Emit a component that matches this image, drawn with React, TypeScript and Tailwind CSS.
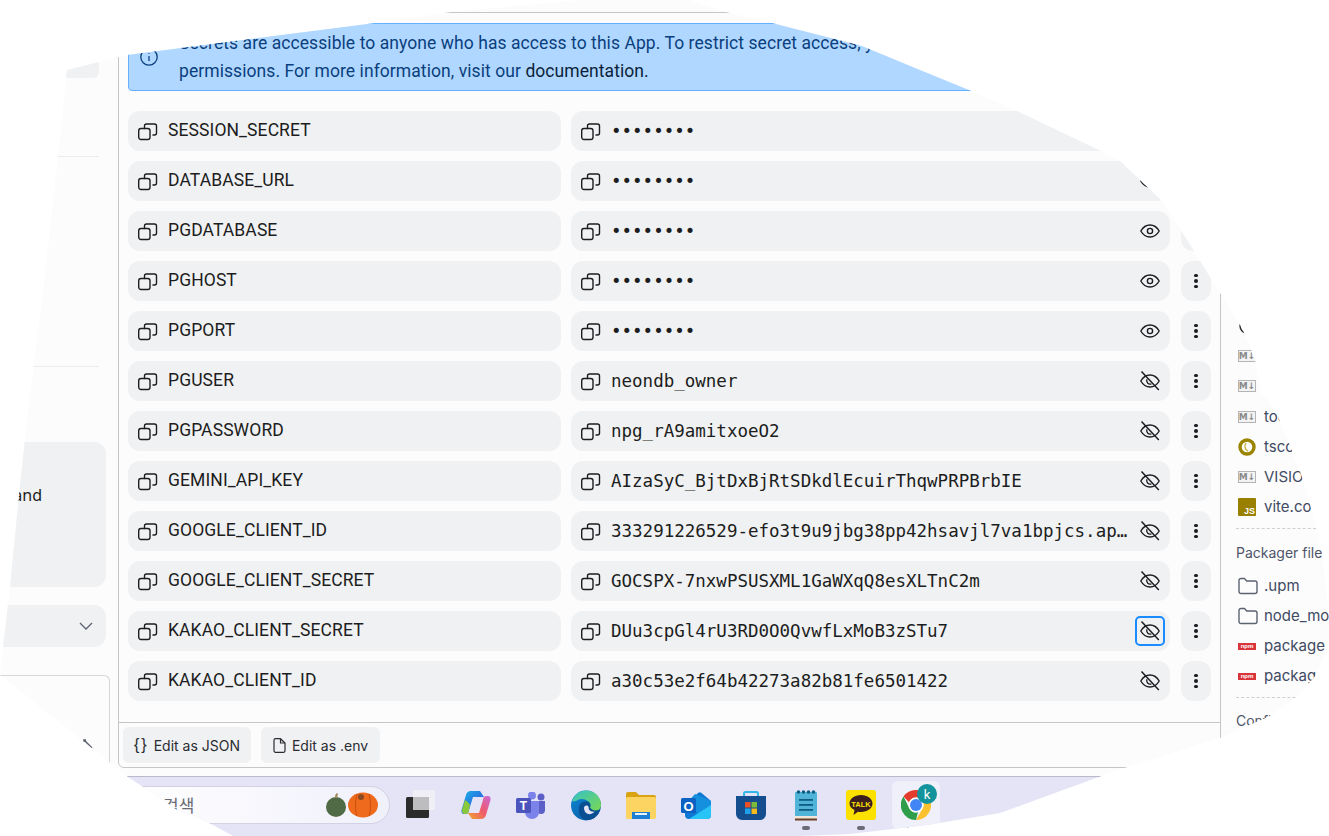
const secrets = [
  { name: "SESSION_SECRET", value: "••••••••", shown: false },
  { name: "DATABASE_URL", value: "••••••••", shown: false },
  { name: "PGDATABASE", value: "••••••••", shown: false },
  { name: "PGHOST", value: "••••••••", shown: false },
  { name: "PGPORT", value: "••••••••", shown: false },
  { name: "PGUSER", value: "neondb_owner", shown: true },
  { name: "PGPASSWORD", value: "npg_rA9amitxoeO2", shown: true },
  { name: "GEMINI_API_KEY", value: "AIzaSyC_BjtDxBjRtSDkdlEcuirThqwPRPBrbIE", shown: true },
  { name: "GOOGLE_CLIENT_ID", value: "333291226529-efo3t9u9jbg38pp42hsavjl7va1bpjcs.apps.googleusercontent.com", shown: true },
  { name: "GOOGLE_CLIENT_SECRET", value: "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", shown: true },
  { name: "KAKAO_CLIENT_SECRET", value: "DUu3cpGl4rU3RD0O0QvwfLxMoB3zSTu7", shown: true, focused: true },
  { name: "KAKAO_CLIENT_ID", value: "a30c53e2f64b42273a82b81fe6501422", shown: true },
];

function CopyIcon() {
  return (
    <svg width="20" height="20" viewBox="0 0 20 20" fill="none" stroke="#1c1d20" strokeWidth="1.4" className="shrink-0">
      <rect x="0.7" y="7.5" width="11.3" height="11" rx="2.2" />
      <path d="M6.5 7.500V5a2 2 0 0 1 2-2h8a2 2 0 0 1 2 2v7a2 2 0 0 1-2 2H15" strokeLinecap="round" />
    </svg>
  );
}

function EyeIcon({ off }: { off?: boolean }) {
  return (
    <svg width="20" height="20" viewBox="0 0 20 20" fill="none" stroke="#1c1d20" strokeWidth="1.4" strokeLinejoin="round">
      <path d="M0.8 10C3 6.2 6.2 4 10 4s7 2.2 9.2 6c-2.2 3.8-5.4 6-9.2 6s-7-2.2-9.2-6Z" />
      {off ? (
        <>
          <path d="M7 8.2a3.4 3.4 0 0 0 4.4 4.6" />
          <path d="M1.5 0.6 18.8 19" strokeWidth="1.5" stroke="#1c1d20" />
        </>
      ) : (
        <circle cx="10" cy="10" r="2.6" />
      )}
    </svg>
  );
}

function SecretRow({ name, value, shown, focused }: { name: string; value: string; shown: boolean; focused?: boolean }) {
  return (
    <div className="flex h-10 items-stretch">
      <div className="flex w-[433px] items-center gap-[10px] rounded-xl bg-[#f0f1f3] pl-[10px]">
        <CopyIcon />
        <span className="pb-[2px] text-[17.5px] leading-[24px] tracking-[0.1px] text-[#1c1d20] [font-family:'Roboto',sans-serif]">{name}</span>
      </div>
      <div className="ml-[10px] flex w-[599px] items-center rounded-xl bg-[#f0f1f3] pl-[10px] pr-[5px]">
        <CopyIcon />
        <span className="ml-[10px] min-w-0 flex-1 truncate pb-[1px] text-[17.5px] leading-[24px] text-[#1c1d20] [font-family:'DejaVu_Sans_Mono',monospace]">
          {value}
        </span>
        <span
          className={`ml-[4px] flex h-[30px] w-[30px] shrink-0 items-center justify-center rounded-[5px] ${
            focused ? "border-2 border-[#1a8cff]" : ""
          }`}
        >
          <EyeIcon off={shown} />
        </span>
      </div>
      <div className="ml-[11px] flex w-[30px] flex-col items-center justify-center gap-[2px] rounded-xl bg-[#f0f1f3]">
        <span className="h-[3.5px] w-[3.5px] rounded-full bg-[#1c1d20]" />
        <span className="h-[3.5px] w-[3.5px] rounded-full bg-[#1c1d20]" />
        <span className="h-[3.5px] w-[3.5px] rounded-full bg-[#1c1d20]" />
      </div>
    </div>
  );
}

function MdIcon() {
  return (
    <span className="flex h-[12px] w-[18px] items-center justify-center border border-[#b4b4b4] bg-[#f3f3f3] text-[9px] font-bold leading-none text-[#8a8a8a] [font-family:'DejaVu_Sans',sans-serif]">
      M↓
    </span>
  );
}

function FolderIcon() {
  return (
    <svg width="20" height="18" viewBox="0 0 20 18" fill="none" stroke="#5c6270" strokeWidth="1.4" strokeLinejoin="round">
      <path d="M1 3.5a2 2 0 0 1 2-2h3.5l2.2 2.5H17a2 2 0 0 1 2 2v8.5a2 2 0 0 1-2 2H3a2 2 0 0 1-2-2Z" />
    </svg>
  );
}

function NpmIcon() {
  return (
    <span className="flex h-[7px] w-[18px] items-center justify-center bg-[#d9343a] text-[6px] font-bold leading-none text-white [font-family:'Liberation_Sans',sans-serif]">
      npm
    </span>
  );
}

function TsIcon() {
  return (
    <svg width="18" height="18" viewBox="0 0 18 18" fill="none">
      <circle cx="9" cy="9" r="7" stroke="#9a8400" strokeWidth="3.4" />
      <path d="M8 5c-2 3-1 7 2 8" stroke="#c9b84a" strokeWidth="1.5" />
    </svg>
  );
}

function JsIcon() {
  return (
    <span className="flex h-[18px] w-[18px] items-end justify-end rounded-[1px] bg-[#9a8000] pr-[1px] text-[9px] font-bold leading-[10px] text-white [font-family:'Liberation_Sans',sans-serif]">
      JS
    </span>
  );
}

function RingIcon() {
  return (
    <svg width="18" height="18" viewBox="0 0 18 18" fill="none" stroke="#2b2d33" strokeWidth="1.4">
      <circle cx="9" cy="9" r="7" />
    </svg>
  );
}

function TreeRow({ icon, label }: { icon: React.ReactNode; label: string }) {
  return (
    <div className="flex h-[30px] items-center whitespace-nowrap pl-[17px] text-[15px] text-[#3f4a63]">
      <span className="flex w-[26px] shrink-0 items-center">{icon}</span>
      {label}
    </div>
  );
}

function Sidebar() {
  return (
    <div className="flex h-[768px] w-[118px] shrink-0 flex-col text-[#1c1d20]">
      <div className="h-[78px] w-[99px] rounded-b-md bg-[#f0f1f3]" />
      <div className="mt-[78px] w-[99px] border-t border-[#ececec]" />
      <div className="mt-[209px] w-[99px] border-t border-[#ececec]" />
      <div className="mt-[75px] flex h-[145px] w-[106px] items-center rounded-r-xl bg-[#f0f1f3] pb-[40px] text-[16px] [font-family:'Noto_Sans',sans-serif]">
        <span className="block w-full pr-[64px] text-right">and</span>
      </div>
      <div className="mt-[18px] flex h-[42px] w-[106px] items-center justify-end rounded-r-xl bg-[#f0f1f3] pr-[13px]">
        <svg width="14" height="8" viewBox="0 0 14 8" fill="none" stroke="#5c6270" strokeWidth="1.3">
          <path d="m1 1 6 6 6-6" />
        </svg>
      </div>
      <div className="mt-[28px] flex h-[93px] w-[110px] items-end justify-end rounded-tr-md border-r border-t border-[#d6d6d8] pb-[19px] pr-[16px]">
        <svg width="10" height="10" viewBox="0 0 10 10" fill="none" stroke="#5c6270" strokeWidth="1.6">
          <path d="M1 3V1h2M1 1l8 8" />
        </svg>
      </div>
    </div>
  );
}

function Panel() {
  return (
    <div className="mt-[12px] flex h-[756px] w-[1103px] shrink-0 flex-col rounded-bl-md border border-[#c6c6c6]">
      <div className="flex-1 px-[9px] pt-[10px]">
        <div className="mb-[20px] flex h-[68px] w-[1083px] gap-[11px] rounded-[4px] border border-[#64b0ff] bg-[#b0d7ff] pl-[11px] pt-[5px] text-[17.5px] leading-[28px] tracking-[0.07px] text-[#0a3f7d] [font-family:'Roboto',sans-serif]">
          <svg width="18" height="18" viewBox="0 0 18 18" fill="none" stroke="#0a3f7d" strokeWidth="1.3" className="mt-[19px] shrink-0">
            <circle cx="9" cy="9" r="8.2" />
            <path d="M9 8v5M9 5v.8" />
          </svg>
          <div className="whitespace-nowrap pl-[10px]">
            <div>Secrets are accessible to anyone who has access to this App. To restrict secret access, you can edit this App's</div>
            <div>
              permissions. For more information, visit our <span className="text-[#0b1f3a]">documentation.</span>
            </div>
          </div>
        </div>
        <div className="flex flex-col gap-[10px]">
          {secrets.map((s) => (
            <SecretRow key={s.name} {...s} />
          ))}
        </div>
      </div>
      <div className="flex h-[45px] items-center gap-[10px] border-t border-[#c6c6c6] px-[4px] text-[14px] text-[#2a2c31] [font-family:'Inter',sans-serif]">
        <button className="flex h-[36px] w-[128px] items-center gap-[5px] rounded-md bg-[#f0f1f3] pl-[11px]">
          <span className="text-[16px] leading-none tracking-[2px] [font-family:'Liberation_Sans',sans-serif]">{"{}"}</span>
          Edit as JSON
        </button>
        <button className="flex h-[36px] w-[119px] items-center justify-center gap-[6px] rounded-md bg-[#f0f1f3]">
          <svg width="13" height="15" viewBox="0 0 13 15" fill="none" stroke="#2a2c31" strokeWidth="1.2" strokeLinejoin="round">
            <path d="M1 2.2A1.5 1.5 0 0 1 2.5.7h5L12 5v7.8a1.5 1.5 0 0 1-1.5 1.5h-8A1.5 1.5 0 0 1 1 12.8Z" />
            <path d="M7.500.7V5H12" />
          </svg>
          Edit as .env
        </button>
      </div>
    </div>
  );
}

function FileTree() {
  return (
    <div className="min-w-0 flex-1 pt-[311px] [font-family:'Inter',sans-serif]">
      <TreeRow icon={<RingIcon />} label="components.json" />
      <TreeRow icon={<MdIcon />} label="README.md" />
      <TreeRow icon={<MdIcon />} label="NOTES.md" />
      <div className="pt-[1px]">
        <TreeRow icon={<MdIcon />} label="todo.md" />
      </div>
      <TreeRow icon={<TsIcon />} label="tsconfig.json" />
      <TreeRow icon={<MdIcon />} label="VISION.md" />
      <TreeRow icon={<JsIcon />} label="vite.config.js" />
      <div className="ml-[15px] mt-[6px] w-[80px] border-t border-dashed border-[#cfcfcf]" />
      <div className="mt-[14px] whitespace-nowrap pl-[15px] text-[14px] leading-[20px] text-[#4e5569]">Packager files</div>
      <div className="mt-[8px]">
        <TreeRow icon={<FolderIcon />} label=".upm" />
        <TreeRow icon={<FolderIcon />} label="node_modules" />
        <TreeRow icon={<NpmIcon />} label="package.json" />
        <TreeRow icon={<NpmIcon />} label="package-lock.json" />
      </div>
      <div className="ml-[15px] mt-[6px] w-[80px] border-t border-dashed border-[#cfcfcf]" />
      <div className="mt-[13px] whitespace-nowrap pl-[15px] text-[14px] leading-[20px] text-[#4e5569]">Config files</div>
    </div>
  );
}

function TaskView() {
  return (
    <svg width="32" height="30" viewBox="0 0 32 30">
      <rect x="1" y="7" width="23" height="21" rx="1.5" fill="#2b2b2b" />
      <rect x="8" y="0" width="22" height="20" rx="1.5" fill="#f1f1f4" fillOpacity="0.85" />
      <rect x="8" y="7" width="16" height="13" fill="#bdbdc0" />
    </svg>
  );
}

function Copilot() {
  return (
    <svg width="30" height="28" viewBox="0 0 30 28">
      <defs>
        <linearGradient id="cpa" x1="0" y1="0" x2="1" y2="1">
          <stop offset="0" stopColor="#19b5e6" />
          <stop offset="0.6" stopColor="#2a6fe0" />
          <stop offset="1" stopColor="#6a4fd8" />
        </linearGradient>
        <linearGradient id="cpb" x1="0" y1="1" x2="1" y2="0">
          <stop offset="0" stopColor="#f0a52a" />
          <stop offset="0.5" stopColor="#ef5a6b" />
          <stop offset="1" stopColor="#c86ad8" />
        </linearGradient>
      </defs>
      <path d="M10 0h9l4 6H12L8 19a4 4 0 0 1-4 4H3c-2 0-3-2-2.500-4L5 4c.7-2.500 2.500-4 5-4Z" fill="url(#cpa)" />
      <path d="M20 28h-9l-4-6h11l4-13a4 4 0 0 1 4-4h1c2 0 3 2 2.500 4L25 24c-.7 2.500-2.500 4-5 4Z" fill="url(#cpb)" />
      <path d="M4 23c-2 0-3.500-2-3-4l3-10c2 1 4 3 5 5l-1 5a4 4 0 0 1-4 4Z" fill="#8bc83c" />
    </svg>
  );
}

function Teams() {
  return (
    <svg width="30" height="27" viewBox="0 0 30 27">
      <circle cx="25" cy="5" r="3.500" fill="#5b5fc7" />
      <circle cx="16" cy="3.500" r="4" fill="#7b83eb" />
      <path d="M21 9h8v9a4 4 0 0 1-8 0Z" fill="#5b5fc7" />
      <path d="M9 9h14v11a7 7 0 0 1-14 0Z" fill="#7b83eb" />
      <rect x="0" y="6" width="15" height="15" rx="1.500" fill="#4b53bc" />
      <text x="7.500" y="18" textAnchor="middle" fontSize="12" fontWeight="700" fill="#fff" fontFamily="Liberation Sans, sans-serif">T</text>
    </svg>
  );
}

function Edge() {
  return (
    <svg width="30" height="31" viewBox="0 0 30 31">
      <defs>
        <linearGradient id="edb" x1="0" y1="0" x2="0.6" y2="1">
          <stop offset="0" stopColor="#0d8ad8" />
          <stop offset="1" stopColor="#0a5fa8" />
        </linearGradient>
        <linearGradient id="edg" x1="0" y1="0" x2="1" y2="1">
          <stop offset="0" stopColor="#35c1c8" />
          <stop offset="1" stopColor="#7ad94e" />
        </linearGradient>
      </defs>
      <circle cx="15" cy="15.500" r="15" fill="url(#edb)" />
      <path d="M1 11C4 4 9 .5 15 .5 24 .5 30 7 30 15c0 4-3 6-7 6-3 0-5-1-5-2 2-2 2-5 0-7-3-3-8-4-11-2-2 1-4 2-6 1Z" fill="url(#edg)" />
      <path d="M8 18c0-5 4-7 8-6.500 3 .5 4 3 3 6 2 3 6 4 10 2-2 7-8 11-13 10.500C10 29 7 24 8 18Z" fill="#0a4f92" />
      <path d="M13 18c0-2 2-3 4-2 1 1 .5 2.500 1 3.500 1.500 2 4 2.500 6 2-2 2-5 3-7 2.500-3-1-4-4-4-6Z" fill="#e4e4f6" />
    </svg>
  );
}

function Explorer() {
  return (
    <svg width="30" height="27" viewBox="0 0 30 27">
      <path d="M0 2a2 2 0 0 1 2-2h8l3 3h15a2 2 0 0 1 2 2v3H0Z" fill="#d9a313" />
      <rect x="0" y="5" width="30" height="22" rx="1.500" fill="#fcd462" />
      <rect x="6" y="20" width="18" height="7" fill="#1b7fd6" />
      <rect x="9" y="21" width="12" height="2" fill="#e9f3fb" />
    </svg>
  );
}

function Outlook() {
  return (
    <svg width="30" height="27" viewBox="0 0 30 27">
      <path d="M4 13 17 1a3 3 0 0 1 3.500 0L30 9v14a4 4 0 0 1-4 4H8a4 4 0 0 1-4-4Z" fill="#0f78d4" />
      <path d="M14 2 30 9v5L18 22 4 13Z" fill="#1490df" />
      <path d="M8 27 30 13v10a4 4 0 0 1-4 4Z" fill="#28c4f5" />
      <rect x="0" y="6" width="15" height="15" rx="1.500" fill="#0c62c2" />
      <text x="7.500" y="18.500" textAnchor="middle" fontSize="13" fontWeight="700" fill="#fff" fontFamily="Liberation Sans, sans-serif">O</text>
    </svg>
  );
}

function Store() {
  return (
    <svg width="30" height="29" viewBox="0 0 30 29">
      <path d="M8 7V2.500A1.500 1.500 0 0 1 9.500 1h11A1.500 1.500 0 0 1 22 2.500V7" fill="none" stroke="#35b6e8" strokeWidth="2" />
      <path d="M0 5h30v18a6 6 0 0 1-6 6H6a6 6 0 0 1-6-6Z" fill="#154e8e" />
      <rect x="9" y="11" width="5.500" height="5.500" fill="#e8502a" />
      <rect x="15.500" y="11" width="5.500" height="5.500" fill="#7db93b" />
      <rect x="9" y="17.500" width="5.500" height="5.500" fill="#1ea1e8" />
      <rect x="15.500" y="17.500" width="5.500" height="5.500" fill="#f6b81a" />
    </svg>
  );
}

function Notepad() {
  return (
    <svg width="22" height="31" viewBox="0 0 22 31">
      <rect x="0" y="2" width="22" height="26" rx="1" fill="#4fb4d8" />
      <rect x="0" y="26" width="22" height="3" fill="#f0e6da" />
      <rect x="0" y="28.500" width="22" height="2" fill="#6b3f26" />
      {[3, 8, 13, 18].map((x) => (
        <circle key={x} cx={x + 0.5} cy="2" r="1.800" fill="#0f5e84" />
      ))}
      {[9, 14, 19].map((y) => (
        <rect key={y} x="4" y={y} width="14" height="1.800" fill="#0f5e84" />
      ))}
    </svg>
  );
}

function Kakao() {
  return (
    <svg width="30" height="30" viewBox="0 0 30 30">
      <rect width="30" height="30" rx="3" fill="#fae100" />
      <path d="M15 5c6.500 0 11.500 3.700 11.500 8.500S21.500 22 15 22c-1 0-2-.1-3-.3L7.500 25l1-5C5.400 18.500 3.500 16.200 3.500 13.500 3.500 8.700 8.500 5 15 5Z" fill="#3b1e1e" />
      <text x="15" y="16.500" textAnchor="middle" fontSize="7.500" fontWeight="700" fill="#fae100" fontFamily="Liberation Sans, sans-serif">TALK</text>
    </svg>
  );
}

function Chrome() {
  return (
    <svg width="30" height="30" viewBox="0 0 30 30">
      <path d="M15 0a15 15 0 0 1 13 7.500H15a7.500 7.500 0 0 0-7 4.700L2.500 6.500A15 15 0 0 1 15 0Z" fill="#e33b2e" />
      <path d="M28 7.500A15 15 0 0 1 15 30l6.500-11.200A7.500 7.500 0 0 0 21.500 11Z" fill="#fbc02d" />
      <path d="M15 30A15 15 0 0 1 2.500 6.500L8.500 18.800A7.500 7.500 0 0 0 17 22Z" fill="#2f9e4a" />
      <circle cx="15" cy="15" r="7.500" fill="#fff" />
      <circle cx="15" cy="15" r="6" fill="#4285f4" />
    </svg>
  );
}

const taskbarApps = [
  { id: "taskview", icon: <TaskView /> },
  { id: "copilot", icon: <Copilot /> },
  { id: "teams", icon: <Teams /> },
  { id: "edge", icon: <Edge /> },
  { id: "explorer", icon: <Explorer /> },
  { id: "outlook", icon: <Outlook /> },
  { id: "store", icon: <Store /> },
  { id: "notepad", icon: <Notepad />, running: true },
  { id: "kakao", icon: <Kakao />, running: true },
];

function Taskbar() {
  return (
    <div className="mt-[7px] flex h-[60px] items-center border-t border-[#b9b9c9] bg-[#e4e4f6] pb-[3px] pl-[120px]">
      <div className="flex h-[38px] w-[270px] shrink-0 items-center justify-between rounded-full border border-[#d2d2e2] bg-gradient-to-r from-white to-[#f0f0fb] pl-[42px] pr-[10px]">
        <span className="text-[17px] text-[#6a6a72] [font-family:'Noto_Sans_CJK_KR',sans-serif]">검색</span>
        <svg width="53" height="26" viewBox="0 0 53 26">
          <ellipse cx="10" cy="15" rx="10" ry="10" fill="#4f6a44" />
          <path d="M9 6c0-2 0-4 2-5l1 1-1 4Z" fill="#a08a5a" />
          <ellipse cx="37" cy="13" rx="15" ry="12.500" fill="#ef6a1c" />
          <path d="M31 2c-2 7-2 16 0 22M43 2c2 7 2 16 0 22" stroke="#c94e10" fill="none" />
          <circle cx="35" cy="5" r="3" fill="#8a4a24" />
        </svg>
      </div>
      <div className="ml-[3px] flex">
        {taskbarApps.map((app) => (
          <div key={app.id} className="relative flex h-[48px] w-[55px] items-center justify-center">
            {app.icon}
            {app.running && (
              <span className="absolute bottom-[-1px] left-1/2 h-[4px] w-[8px] -translate-x-1/2 rounded-full bg-[#6b6b78]" />
            )}
          </div>
        ))}
        <div className="relative ml-[4px] flex h-[48px] w-[48px] items-center justify-center rounded-md bg-[#f0f0fa]">
          <Chrome />
          <span className="absolute left-[25px] top-[3px] flex h-[20px] w-[20px] items-center justify-center rounded-full bg-[#13939b] text-[13px] leading-none text-white [font-family:'Roboto',sans-serif]">
            k
          </span>
          <span className="absolute bottom-[-1px] left-1/2 h-[3px] w-[19px] -translate-x-1/2 rounded-full bg-[#0c6fd6]" />
        </div>
      </div>
    </div>
  );
}

export default function App() {
  return (
    <div className="h-[836px] w-[1329px] overflow-hidden bg-white">
      <div className="h-full w-full overflow-hidden bg-[#fcfcfc] [clip-path:polygon(580px_0,690px_0,726px_12px,772px_23px,862px_46px,920px_70px,969px_90px,1017px_111px,1101px_151px,1120px_161px,1162px_201px,1170px_213px,1194px_251px,1210px_277px,1220px_293px,1242px_328px,1250px_347px,1255px_360px,1261px_392px,1276px_412px,1291px_448px,1302px_477px,1311px_508px,1317px_528px,1322px_552px,1329px_617px,1329px_635px,1326px_650px,1316px_675px,1298px_696px,1270px_716px,1220px_738px,1118px_770px,1000px_813px,927px_825px,850px_834px,800px_836px,233px_836px,213px_825px,197px_817px,177px_810px,163px_800px,128px_777px,0_675px,3px_647px,10px_587px,19px_495px,27px_420px,42px_300px,58px_157px,67px_70px,127px_55px,375px_23px,451px_12px)]">
        <div className="flex h-[769px]">
          <Sidebar />
          <Panel />
          <FileTree />
        </div>
        <Taskbar />
      </div>
    </div>
  );
}
